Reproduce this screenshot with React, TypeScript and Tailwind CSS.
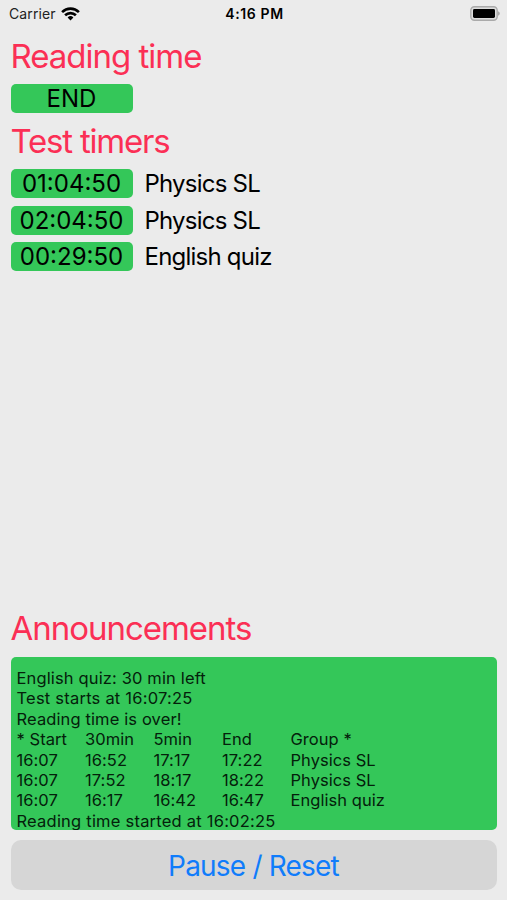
import type { ReactNode } from 'react';

const timers = [
    { time: '01:04:50', name: 'Physics SL' },
    { time: '02:04:50', name: 'Physics SL' },
    { time: '00:29:50', name: 'English quiz' },
];

const schedule = [
    ['* Start', '30min', '5min', 'End', 'Group *'],
    ['16:07', '16:52', '17:17', '17:22', 'Physics SL'],
    ['16:07', '17:52', '18:17', '18:22', 'Physics SL'],
    ['16:07', '16:17', '16:42', '16:47', 'English quiz'],
];

function Heading({ children, spacing = 'tracking-[-1px]' }: { children: ReactNode; spacing?: string }) {
    return (
        <h2 className={`h-[42px] text-[33px] leading-[42px] text-[#fb2f55] whitespace-nowrap ${spacing}`}>
            {children}
        </h2>
    );
}

function Pill({ children }: { children: ReactNode }) {
    return (
        <div className="w-[122px] h-[29px] shrink-0 rounded-[5px] bg-[#34c759] text-center text-[24px] leading-[30px] whitespace-nowrap">
            {children}
        </div>
    );
}

function StatusBar() {
    return (
        <div className="grid grid-cols-3 items-center h-[27px] pl-[9px] pr-[7px] text-[14px] leading-[27px]">
            <div className="flex items-center gap-[5px]">
                <span className="text-[#222] tracking-[0.1px]">Carrier</span>
                <svg width="19" height="14" viewBox="0 0 19 14" fill="none" stroke="#000" strokeWidth="2.6">
                    <path d="M1.1 5.1a12 12 0 0 1 16.8 0" />
                    <path d="M4.1 8.3a7.7 7.7 0 0 1 10.8 0" />
                    <path d="M9.5 13.4 6.6 10.5a4.1 4.1 0 0 1 5.8 0Z" fill="#000" stroke="none" />
                </svg>
            </div>
            <span className="text-center font-semibold tracking-[0.6px]">4:16 PM</span>
            <svg className="justify-self-end" width="30" height="15" viewBox="0 0 30 15">
                <rect x="0.8" y="0.8" width="26.4" height="13.4" rx="3.6" fill="#ddd" stroke="#aaa" strokeWidth="1.4" />
                <rect x="3" y="3" width="22" height="9" rx="1.4" fill="#000" />
                <path d="M28 5.3c2.4 1 2.4 3.4 0 4.4Z" fill="#aaa" />
            </svg>
        </div>
    );
}

export default function App() {
    return (
        <div
            className="flex flex-col w-[507px] h-[900px] overflow-hidden bg-[#ebebeb] text-black"
            style={{ fontFamily: 'Inter, "Liberation Sans", sans-serif' }}
        >
            <StatusBar />

            <main className="flex flex-col flex-1 px-[10.5px] pt-[8px] pb-[10px]">
                <Heading>Reading time</Heading>
                <div className="mt-[6.5px]">
                    <Pill>END</Pill>
                </div>

                <div className="mt-[7.5px]">
                    <Heading spacing="tracking-[-1.2px]">Test timers</Heading>
                </div>
                <div className="flex flex-col gap-[7.6px] mt-[7px]">
                    {timers.map((timer, i) => (
                        <div key={i} className="flex items-center gap-[12px] h-[29px]">
                            <Pill>{timer.time}</Pill>
                            <span className="pt-[1px] text-[24px] leading-[30px] whitespace-nowrap tracking-[-0.78px]">
                                {timer.name}
                            </span>
                        </div>
                    ))}
                </div>

                <div className="mt-auto">
                    <Heading spacing="tracking-[-1.03px]">Announcements</Heading>
                </div>
                <div className="mt-[8px] h-[173px] overflow-hidden rounded-[5px] bg-[#34c759] pt-[11px] pl-[6px] text-[16.5px] leading-[20.4px] tracking-[0.22px] whitespace-nowrap text-[#04200b]">
                    <p className="tracking-[0.14px]">English quiz: 30 min left</p>
                    <p>Test starts at 16:07:25</p>
                    <p className="tracking-[0.12px]">Reading time is over!</p>
                    {schedule.map((row, i) => (
                        <div
                            key={i}
                            className="grid grid-cols-[68.5px_68.5px_68.5px_68.5px_auto] tracking-[0.05px]"
                        >
                            {row.map((cell, j) => (
                                <span key={j}>{cell}</span>
                            ))}
                        </div>
                    ))}
                    <p>Reading time started at 16:02:25</p>
                </div>

                <button
                    type="button"
                    className="mt-[10px] h-[50px] shrink-0 rounded-[10px] bg-[#d6d6d6] pt-[2px] text-[28px] leading-[48px] tracking-[-0.8px] text-[#107cfb]"
                >
                    Pause / Reset
                </button>
            </main>
        </div>
    );
}
